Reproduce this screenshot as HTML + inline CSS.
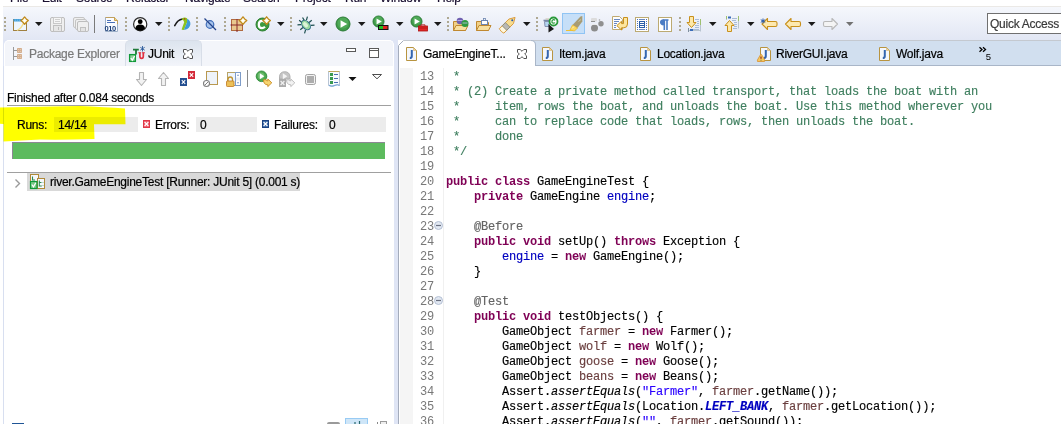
<!DOCTYPE html><html><head><meta charset="utf-8"><style>
*{margin:0;padding:0;box-sizing:border-box}
html,body{width:1061px;height:424px;overflow:hidden;background:#dfe5f5;position:relative;font-family:"Liberation Sans",sans-serif;font-size:12px;color:#000}
.a{position:absolute}
.t{position:absolute;white-space:pre;font-family:"Liberation Sans",sans-serif;font-size:12px;letter-spacing:-0.25px;line-height:14px;-webkit-text-stroke:0.2px currentColor}
svg{position:absolute;overflow:visible}
.code{position:absolute;left:446px;font-family:"Liberation Mono",monospace;font-size:12px;letter-spacing:-0.2px;white-space:pre;line-height:15px;color:#000;-webkit-text-stroke:0.15px currentColor}
.ln{position:absolute;left:405px;width:29px;text-align:right;font-family:"Liberation Mono",monospace;font-size:12px;letter-spacing:-0.2px;white-space:pre;line-height:15px;color:#787878}
.k{color:#7f0055;font-weight:bold;-webkit-text-stroke:0}
.c{color:#3f7f5f}
.f{color:#0000c0}
.an{color:#646464}
.lv{color:#6a3e3e}
.s{color:#2a00ff}
.i{font-style:italic}
</style></head><body>
<div class="a" style="left:0;top:0;width:3px;height:424px;background:#fff"></div>
<div class="a" style="left:0;top:0;width:1061px;height:6px;background:#fff;overflow:hidden">
<div class="t" style="left:10px;top:-9px;color:#1a1030">File</div>
<div class="t" style="left:42px;top:-9px;color:#1a1030">Edit</div>
<div class="t" style="left:76px;top:-9px;color:#1a1030">Source</div>
<div class="t" style="left:126px;top:-9px;color:#1a1030">Refactor</div>
<div class="t" style="left:185px;top:-9px;color:#1a1030">Navigate</div>
<div class="t" style="left:243px;top:-9px;color:#1a1030">Search</div>
<div class="t" style="left:295px;top:-9px;color:#1a1030">Project</div>
<div class="t" style="left:345px;top:-9px;color:#1a1030">Run</div>
<div class="t" style="left:380px;top:-9px;color:#1a1030">Window</div>
<div class="t" style="left:437px;top:-9px;color:#1a1030">Help</div>
</div>
<div class="a" style="left:3px;top:6px;width:1058px;height:34px;background:linear-gradient(#f5f7fc,#e2e7f4);border-top:1px solid #ebe9e6"></div>
<div class="a" style="left:4px;top:40px;width:390px;height:400px;background:#fff;border:1px solid #fff;border-bottom:0;border-radius:5px 5px 0 0;overflow:hidden">
<div class="a" style="left:0;top:0;width:388px;height:25px;background:#f3f5fa"></div>
</div>
<div class="a" style="left:125px;top:40px;width:77px;height:26px;background:linear-gradient(#dce4ee,#f3f5fa);border:1px solid #d8dee8;border-bottom:0;border-radius:5px 5px 0 0"></div>
<div class="a" style="left:3px;top:66px;width:1px;height:360px;background:#d8dff0"></div>
<div class="t" style="left:29px;top:47px;color:#7a7a7a">Package Explorer</div>
<div class="t" style="left:148px;top:47px;color:#000">JUnit</div>
<div class="t" style="left:7px;top:91px">Finished after 0.084 seconds</div>
<div class="a" style="left:7px;top:105px;width:384px;height:1px;background:#a0a0a0"></div>
<div class="a" style="left:54px;top:117px;width:84px;height:15px;background:#ececec"></div>
<div class="a" style="left:196px;top:117px;width:61px;height:15px;background:#ececec"></div>
<div class="a" style="left:325px;top:117px;width:61px;height:15px;background:#ececec"></div>
<div class="t" style="left:17px;top:118px">Runs:</div>
<div class="t" style="left:58px;top:118px">14/14</div>
<div class="t" style="left:155px;top:118px">Errors:</div>
<div class="t" style="left:200px;top:118px">0</div>
<div class="t" style="left:274px;top:118px">Failures:</div>
<div class="t" style="left:329px;top:118px">0</div>
<div class="a" style="left:12px;top:142px;width:373px;height:17px;background:#5dbb5e;border-top:1px solid #8c8894;border-left:1px solid #8c8894"></div>
<div class="a" style="left:7px;top:172px;width:384px;height:1px;background:#a0a0a0"></div>
<div class="a" style="left:27px;top:173px;width:273px;height:18px;background:#d9d9d9"></div>
<div class="t" style="left:50px;top:175px">river.GameEngineTest [Runner: JUnit 5] (0.001 s)</div>
<svg class="a" style="left:0;top:0;mix-blend-mode:multiply" width="1061" height="424"><path d="M0 107.5 Q40 106.5 79 106 Q105 107 125 108.5 L125.5 124.3 L94 124.3 L94.5 139 Q60 140 40 139.5 L3.5 141.5 L3.5 124 L0 123.7 Z" fill="#ffff00"/></svg>
<svg class="a" style="left:0;top:0" width="1061" height="424"><rect x="398" y="40" width="663" height="384" fill="#fff"/><rect x="531" y="40" width="530" height="26" fill="#d1dfef"/><path d="M535 65.5H1061" stroke="#a9b6c8" stroke-width="1"/><path d="M531 40.5H1061" stroke="#c4c9d0" stroke-width="1"/><path d="M399 66V45L403.5 40.5H531Q535 40.5 535 45V66Z" fill="#fff"/><path d="M398.5 424V45.5L403.5 40.5" stroke="#a4acbc" stroke-width="1" fill="none"/><path d="M403.5 40.5H531" stroke="#c4c9d0" stroke-width="1" fill="none"/><path d="M531 40.5Q535.5 40.5 535.5 45V66" stroke="#a9b6c8" stroke-width="1" fill="none"/><rect x="400" y="68" width="13" height="356" fill="#f5f5f5"/><rect x="443" y="68" width="1" height="356" fill="#f0f0f0"/></svg>
<div class="t" style="left:423px;top:47px;color:#000">GameEngineT...</div>
<div class="t" style="left:559px;top:47px;color:#000">Item.java</div>
<div class="t" style="left:657px;top:47px;color:#000">Location.java</div>
<div class="t" style="left:776px;top:47px;color:#000">RiverGUI.java</div>
<div class="t" style="left:896px;top:47px;color:#000">Wolf.java</div>
<div class="ln" style="top:70px">13</div>
<div class="code" style="top:70px"><span class="c"> *</span></div>
<div class="ln" style="top:85px">14</div>
<div class="code" style="top:85px"><span class="c"> * (2) Create a private method called transport, that loads the boat with an</span></div>
<div class="ln" style="top:100px">15</div>
<div class="code" style="top:100px"><span class="c"> *     item, rows the boat, and unloads the boat. Use this method wherever you</span></div>
<div class="ln" style="top:115px">16</div>
<div class="code" style="top:115px"><span class="c"> *     can to replace code that loads, rows, then unloads the boat.</span></div>
<div class="ln" style="top:130px">17</div>
<div class="code" style="top:130px"><span class="c"> *     done</span></div>
<div class="ln" style="top:145px">18</div>
<div class="code" style="top:145px"><span class="c"> */</span></div>
<div class="ln" style="top:160px">19</div>
<div class="code" style="top:160px"></div>
<div class="ln" style="top:175px">20</div>
<div class="code" style="top:175px"><span class="k">public</span> <span class="k">class</span> GameEngineTest {</div>
<div class="ln" style="top:190px">21</div>
<div class="code" style="top:190px">    <span class="k">private</span> GameEngine <span class="f">engine</span>;</div>
<div class="ln" style="top:205px">22</div>
<div class="code" style="top:205px"></div>
<div class="ln" style="top:220px">23</div>
<div class="code" style="top:220px">    <span class="an">@Before</span></div>
<div class="ln" style="top:235px">24</div>
<div class="code" style="top:235px">    <span class="k">public</span> <span class="k">void</span> setUp() <span class="k">throws</span> Exception {</div>
<div class="ln" style="top:250px">25</div>
<div class="code" style="top:250px">        <span class="f">engine</span> = <span class="k">new</span> GameEngine();</div>
<div class="ln" style="top:265px">26</div>
<div class="code" style="top:265px">    }</div>
<div class="ln" style="top:280px">27</div>
<div class="code" style="top:280px"></div>
<div class="ln" style="top:295px">28</div>
<div class="code" style="top:295px">    <span class="an">@Test</span></div>
<div class="ln" style="top:310px">29</div>
<div class="code" style="top:310px">    <span class="k">public</span> <span class="k">void</span> testObjects() {</div>
<div class="ln" style="top:325px">30</div>
<div class="code" style="top:325px">        GameObject <span class="lv">farmer</span> = <span class="k">new</span> Farmer();</div>
<div class="ln" style="top:340px">31</div>
<div class="code" style="top:340px">        GameObject <span class="lv">wolf</span> = <span class="k">new</span> Wolf();</div>
<div class="ln" style="top:355px">32</div>
<div class="code" style="top:355px">        GameObject <span class="lv">goose</span> = <span class="k">new</span> Goose();</div>
<div class="ln" style="top:370px">33</div>
<div class="code" style="top:370px">        GameObject <span class="lv">beans</span> = <span class="k">new</span> Beans();</div>
<div class="ln" style="top:385px">34</div>
<div class="code" style="top:385px">        Assert.<span class="i">assertEquals</span>(<span class="s">"Farmer"</span>, <span class="lv">farmer</span>.getName());</div>
<div class="ln" style="top:400px">35</div>
<div class="code" style="top:400px">        Assert.<span class="i">assertEquals</span>(Location.<span class="f i" style="font-weight:bold">LEFT_BANK</span>, <span class="lv">farmer</span>.getLocation());</div>
<div class="ln" style="top:415px">36</div>
<div class="code" style="top:415px">        Assert.<span class="i">assertEquals</span>(<span class="s">""</span>, <span class="lv">farmer</span>.getSound());</div>
<svg class="a" style="left:0;top:0" width="1061" height="424" viewBox="0 0 1061 424"><rect x="4" y="17" width="2" height="2" fill="#aea892"/><rect x="4" y="21" width="2" height="2" fill="#aea892"/><rect x="4" y="25" width="2" height="2" fill="#aea892"/><rect x="4" y="29" width="2" height="2" fill="#aea892"/><rect x="13.5" y="19.5" width="13" height="11" fill="#eef6fe" stroke="#a08040"/><rect x="13.5" y="19" width="10" height="2.5" fill="#45a0da"/><path d="M15 20.2H21" stroke="#9ad0f0" stroke-width="0.6" stroke-dasharray="1 1"/><path d="M17 30.5 Q22 28 24 22" stroke="#f2dc8a" stroke-width="1.3" fill="none"/><polygon points="24.60,16.90 26.27,18.94 28.30,20.60 26.27,22.27 24.60,24.30 22.94,22.27 20.90,20.60 22.94,18.94" fill="#fffae0" stroke="#c08a1c" stroke-width="1.3" stroke-linejoin="round"/><circle cx="24.6" cy="20.6" r="1.11" fill="#fff"/><polygon points="35,22 42.5,22 38.75,26" fill="#1a1a1a"/><rect x="50.5" y="17.5" width="14" height="14" rx="1.5" fill="#efefef" stroke="#bdbdbd"/><rect x="53.5" y="17.5" width="8" height="6" fill="#f6f6f6" stroke="#c8c8c8"/><path d="M55 19.5H60M55 21.5H60" stroke="#cfcfcf" stroke-width="1"/><rect x="53.5" y="25.5" width="8" height="6" fill="#e6e6e6" stroke="#c0c0c0"/><path d="M58.5 27V30" stroke="#bdbdbd" stroke-width="1"/><rect x="73.5" y="17.5" width="11" height="10" rx="1.5" fill="#efefef" stroke="#c4c4c4"/><rect x="75.5" y="19.5" width="11" height="10" rx="1.5" fill="#efefef" stroke="#c4c4c4"/><rect x="77.5" y="21.5" width="11" height="10" rx="1.5" fill="#efefef" stroke="#bdbdbd"/><rect x="80.5" y="27.5" width="5" height="4" fill="#e3e3e3" stroke="#c0c0c0"/><rect x="94" y="15" width="1" height="18" fill="#7a7a7a"/><path d="M105.5 17.5H114.5L117.5 20.5V31.5H105.5Z" fill="#fbfcff" stroke="#9eb0c8"/><path d="M105.5 17.5H114.5L117.5 20.5V24" stroke="#c0a060" fill="none"/><path d="M114.5 17.5V20.5H117.5" fill="#f0d890" stroke="#c8a050"/><path d="M107 20.5H111M107 22.5H115" stroke="#4a70b8" stroke-width="1"/><text x="104.5" y="30.5" font-family="Liberation Sans" font-weight="bold" font-size="7.5" fill="#1c3f7a" letter-spacing="-0.4">010</text><rect x="125" y="17" width="2" height="2" fill="#aea892"/><rect x="125" y="21" width="2" height="2" fill="#aea892"/><rect x="125" y="25" width="2" height="2" fill="#aea892"/><rect x="125" y="29" width="2" height="2" fill="#aea892"/><circle cx="140.2" cy="24.2" r="6.6" fill="#fff" stroke="#2a2a2a" stroke-width="1.2"/><circle cx="140.2" cy="21.7" r="2.4" fill="#000"/><path d="M135.3 28.6 Q135.8 24.4 140.2 24.4 Q144.6 24.4 145.1 28.6 Q143 30.8 140.2 30.8 Q137.4 30.8 135.3 28.6Z" fill="#000"/><polygon points="155,22 162.5,22 158.75,26" fill="#1a1a1a"/><rect x="168" y="17" width="2" height="2" fill="#aea892"/><rect x="168" y="21" width="2" height="2" fill="#aea892"/><rect x="168" y="25" width="2" height="2" fill="#aea892"/><rect x="168" y="29" width="2" height="2" fill="#aea892"/><path d="M174.8 25.5 Q177.5 19.8 182.5 19" stroke="#1a1a1a" stroke-width="1.7" fill="none" stroke-linecap="round"/><path d="M181.8 18.6 Q184.5 16.6 187 18.2 Q188 19.8 187 22.5 L184 29.8 Q182.8 30.3 181.6 29.6 L184.2 22.2 Q184 20.3 181.8 19.6 Z" fill="#8cc31e"/><path d="M187.2 18.8 Q190.6 20.8 190.4 24.2 Q190 28.2 185 29.8 L183.9 29.8 L187 22.4 Z" fill="#3d9ad8"/><circle cx="184.6" cy="18.9" r="0.8" fill="#b04a20"/><rect x="196" y="17" width="2" height="2" fill="#aea892"/><rect x="196" y="21" width="2" height="2" fill="#aea892"/><rect x="196" y="25" width="2" height="2" fill="#aea892"/><rect x="196" y="29" width="2" height="2" fill="#aea892"/><circle cx="210" cy="24.5" r="3.8" fill="#a8c4ec" stroke="#3e6cb8" stroke-width="1.2"/><path d="M204.5 18.5 L216 30" stroke="#23428a" stroke-width="1.2"/><rect x="224" y="17" width="2" height="2" fill="#aea892"/><rect x="224" y="21" width="2" height="2" fill="#aea892"/><rect x="224" y="25" width="2" height="2" fill="#aea892"/><rect x="224" y="29" width="2" height="2" fill="#aea892"/><rect x="231.5" y="19.5" width="11" height="11" fill="#e9c98e" stroke="#b06a40"/><path d="M231 25H243M237 19V31" stroke="#8a2a2a" stroke-width="1"/><path d="M230.5 25H232M237 30.5V32" stroke="#8a2a2a" stroke-width="1"/><polygon points="243.00,16.80 244.71,18.89 246.80,20.60 244.71,22.31 243.00,24.40 241.29,22.31 239.20,20.60 241.29,18.89" fill="#fffae0" stroke="#c08a1c" stroke-width="1.3" stroke-linejoin="round"/><circle cx="243" cy="20.6" r="1.14" fill="#fff"/><circle cx="262.5" cy="24.5" r="6.5" fill="#3e9a3e" stroke="#2b8030" stroke-width="1"/><path d="M265 22.2 Q263.5 20.8 262 20.8 Q258.8 20.8 258.8 24.5 Q258.8 28.2 262 28.2 Q263.5 28.2 265 26.8" stroke="#fff" stroke-width="2.2" fill="none"/><polygon points="266.60,16.80 268.31,18.89 270.40,20.60 268.31,22.31 266.60,24.40 264.89,22.31 262.80,20.60 264.89,18.89" fill="#fffae0" stroke="#c08a1c" stroke-width="1.3" stroke-linejoin="round"/><circle cx="266.6" cy="20.6" r="1.14" fill="#fff"/><polygon points="277,22 284.5,22 280.75,26" fill="#1a1a1a"/><rect x="290" y="17" width="2" height="2" fill="#aea892"/><rect x="290" y="21" width="2" height="2" fill="#aea892"/><rect x="290" y="25" width="2" height="2" fill="#aea892"/><rect x="290" y="29" width="2" height="2" fill="#aea892"/><g transform="rotate(-40 306 25)"><path d="M302.5 21.5L299.5 19.5M309.5 21.5L312.5 19.5M302 25H298.5M310 25H313.5M302.5 28.5L299.5 30.5M309.5 28.5L312.5 30.5M304.5 20.8L303.8 17M307.5 20.8L308.2 17" stroke="#1d4f4f" stroke-width="1.2"/><ellipse cx="306" cy="25" rx="3.6" ry="5.4" fill="#9ad8a0" stroke="#2a6a80" stroke-width="1"/><ellipse cx="305.8" cy="24.5" rx="1.8" ry="3" fill="#dcf4d8"/></g><polygon points="320,22 327.5,22 323.75,26" fill="#1a1a1a"/><circle cx="343" cy="24" r="7" fill="#3f9a48" stroke="#2a7a35" stroke-width="1"/><circle cx="343" cy="23" r="5.5" fill="#5ab462" opacity="0.6"/><polygon points="340.55,20.15 347.2,24 340.55,27.85" fill="#fff"/><polygon points="358,22 365.5,22 361.75,26" fill="#1a1a1a"/><circle cx="378.5" cy="21.5" r="5.5" fill="#3f9a48" stroke="#2a7a35" stroke-width="1"/><circle cx="378.5" cy="20.5" r="4.0" fill="#5ab462" opacity="0.6"/><polygon points="376.575,18.475 381.8,21.5 376.575,24.525" fill="#fff"/><rect x="378" y="25" width="10.5" height="5" fill="#111"/><rect x="379" y="26" width="4" height="3" fill="#22c020"/><rect x="383" y="26" width="4.5" height="3" fill="#e02020"/><polygon points="396,22 403.5,22 399.75,26" fill="#1a1a1a"/><circle cx="416.5" cy="21.5" r="5.5" fill="#3f9a48" stroke="#2a7a35" stroke-width="1"/><circle cx="416.5" cy="20.5" r="4.0" fill="#5ab462" opacity="0.6"/><polygon points="414.575,18.475 419.8,21.5 414.575,24.525" fill="#fff"/><rect x="418.5" y="26" width="9" height="5" fill="#e02828" stroke="#b01010" stroke-width="0.8"/><path d="M421 26V24.8H425V26M418.5 28H427.5" stroke="#b01010" stroke-width="0.8" fill="none"/><polygon points="434,22 441.5,22 437.75,26" fill="#1a1a1a"/><rect x="447" y="17" width="2" height="2" fill="#aea892"/><rect x="447" y="21" width="2" height="2" fill="#aea892"/><rect x="447" y="25" width="2" height="2" fill="#aea892"/><rect x="447" y="29" width="2" height="2" fill="#aea892"/><path d="M453.5 21.5H458L459 22.5H465.5V30.5H453.5Z" fill="#f0d088" stroke="#c08830"/><path d="M453.5 30.5L456 25.5H468L465.5 30.5Z" fill="#f8e0a0" stroke="#c08830"/><circle cx="460" cy="21" r="3.3" fill="#7060b0"/><circle cx="465" cy="23.5" r="3.5" fill="#2e9a40"/><path d="M457.5 20.5H462.5M462.5 23H467.5" stroke="#c8c0f0" stroke-width="0.8"/><path d="M476.5 21.5H481L482 22.5H488.5V30.5H476.5Z" fill="#f0d088" stroke="#c08830"/><path d="M476.5 30.5L479 25.5H491L488.5 30.5Z" fill="#f8e0a0" stroke="#c08830"/><rect x="481.5" y="20.5" width="6" height="4" fill="#fff" stroke="#6d86b0"/><rect x="483.5" y="18.5" width="2" height="2" fill="none" stroke="#6d86b0" stroke-width="0.8"/><g transform="rotate(-45 508 24.5)"><path d="M499 21.3H512.5L518 24.5L512.5 27.7H499Q497.6 24.5 499 21.3Z" fill="#f7dc8e" stroke="#d8983a" stroke-width="0.9"/><path d="M499.3 21.8H503V27.2H499.3Q498.3 24.5 499.3 21.8Z" fill="#fff8e0"/><rect x="503" y="21.3" width="4.5" height="6.4" fill="#b8b8b4" stroke="#8a8a78" stroke-width="0.8"/><circle cx="514" cy="24.5" r="1" fill="#2a5ab0"/></g><polygon points="523,22 530.5,22 526.75,26" fill="#1a1a1a"/><rect x="536" y="17" width="2" height="2" fill="#aea892"/><rect x="536" y="21" width="2" height="2" fill="#aea892"/><rect x="536" y="25" width="2" height="2" fill="#aea892"/><rect x="536" y="29" width="2" height="2" fill="#aea892"/><path d="M543.5 20.5H551" stroke="#7888a8" stroke-width="1.6"/><path d="M545.5 19H549" stroke="#c8c0a8" stroke-width="1"/><path d="M544.5 21.5H549.5L549 26.5H545Z" fill="#b4d4f0" stroke="#7a88a8" stroke-width="0.9"/><circle cx="553.5" cy="21.5" r="4" fill="#fff" stroke="#2a9a3a" stroke-width="1.8"/><path d="M555.2 20.2Q554 19.3 553 19.8Q551.5 20.6 552 22.4Q552.8 23.8 555.2 22.8" stroke="#2a9a3a" stroke-width="1.2" fill="none"/><polygon points="548.5,24 554,29 548.5,32.5" fill="#1a1a1a"/><rect x="562.5" y="13.5" width="22" height="20" fill="#c6dff8" stroke="#90c4f4"/><path d="M572.5 25 L580.5 16.5 L582.3 16 L582.3 21.5 L577.5 28 Z" fill="#a89c74"/><path d="M578.5 21.5 L581 19.5" stroke="#c8c8b4" stroke-width="0.9"/><path d="M570 30 L572.5 25 L577.5 28 L574.5 31 Z" fill="#fad860" stroke="#e8b020" stroke-width="0.7"/><path d="M572 28.5 L574 26.5" stroke="#fff0c0" stroke-width="1"/><path d="M566 30.5 H573" stroke="#f0c030" stroke-width="1"/><rect x="591" y="18" width="6" height="3.5" rx="1" fill="#dcdcdc"/><path d="M591 21.5H595" stroke="#909090" stroke-width="1"/><circle cx="594.5" cy="28" r="3.5" fill="#8c8c8c"/><path d="M592 24.5H597" stroke="#f0f0f0" stroke-width="0.8"/><circle cx="601" cy="23.8" r="2.7" fill="#909090"/><circle cx="599.5" cy="20" r="0.8" fill="#a0a0a0"/><path d="M612.5 16.5H619.5L622.5 19.5V29.5H612.5Z" fill="#fdfdfd" stroke="#c0aa70"/><path d="M614 19.5H620M614 21.5H619M614 23.5H617M614 25.5H616M614 27.5H616" stroke="#6a88c0" stroke-width="1"/><path d="M623.5 17.5H627.5V24Q627.5 27.8 623.8 27.8H621.5V30L616.8 25.6L621.5 21.3V23.6H623.5Z" fill="#fde6a0" stroke="#c8901c" stroke-width="1" stroke-linejoin="round"/><rect x="635.5" y="17.5" width="13" height="14" fill="#fff" stroke="#bcaa72"/><rect x="637" y="19" width="1" height="1" fill="#4a70b8"/><rect x="646" y="19" width="1" height="1" fill="#4a70b8"/><rect x="637" y="21" width="1" height="1" fill="#4a70b8"/><rect x="646" y="21" width="1" height="1" fill="#4a70b8"/><rect x="637" y="23" width="1" height="1" fill="#4a70b8"/><rect x="646" y="23" width="1" height="1" fill="#4a70b8"/><rect x="637" y="25" width="1" height="1" fill="#4a70b8"/><rect x="646" y="25" width="1" height="1" fill="#4a70b8"/><rect x="637" y="27" width="1" height="1" fill="#4a70b8"/><rect x="646" y="27" width="1" height="1" fill="#4a70b8"/><rect x="637" y="29" width="1" height="1" fill="#4a70b8"/><rect x="646" y="29" width="1" height="1" fill="#4a70b8"/><path d="M639 19.5H645M639 29.5H645" stroke="#6a88c0" stroke-width="1"/><rect x="639.5" y="21.5" width="5" height="6" fill="#fff" stroke="#2a5fa8"/><path d="M640 23.5H644M640 25.5H644" stroke="#2a5fa8" stroke-width="1"/><rect x="658.5" y="17.5" width="13" height="14" fill="#fff" stroke="#bcaa72"/><path d="M662.5 20 H668.5 M663 20 Q660.5 20.5 660.8 22.5 Q661 24.5 663.5 24.8 Z M664.3 20V30 M667 20V30" stroke="#4a7cc4" stroke-width="1.6" fill="#4a7cc4"/><rect x="679" y="17" width="2" height="2" fill="#aea892"/><rect x="679" y="21" width="2" height="2" fill="#aea892"/><rect x="679" y="25" width="2" height="2" fill="#aea892"/><rect x="679" y="29" width="2" height="2" fill="#aea892"/><path d="M689 30.5H700.5M700.5 19V31.5" stroke="#b8c4d0" stroke-width="1"/><path d="M700.5 19V25" stroke="#9ec070" stroke-width="1"/><path d="M695 19.5H699M697 21.5H699M697 23.5H699M695 25.5H699M695 27.5H699M692 29.5H699" stroke="#a8bcd8" stroke-width="1"/><rect x="690" y="29" width="3" height="2" fill="#3a6cb8"/><rect x="688" y="28" width="1" height="4" fill="#8090a0"/><path d="M689.5 16.5H693.5V22.5H696L691.5 27.5L687 22.5H689.5Z" fill="#fde8a8" stroke="#c8901c" stroke-width="1"/><polygon points="709,22 716.5,22 712.75,26" fill="#1a1a1a"/><path d="M738.5 16V28.5M726.5 16V20" stroke="#b8c4d0" stroke-width="1"/><path d="M738.5 16V21M726.5 16V19" stroke="#9ec070" stroke-width="1"/><path d="M732 18.5H737M732 20.5H736M734 22.5H737M734 24.5H737M734 26.5H737M733 28.5H737" stroke="#a8bcd8" stroke-width="1"/><rect x="728" y="16.5" width="3" height="2" fill="#3a6cb8"/><path d="M727.5 31.5H731.5V25.5H734L729.5 20.5L725 25.5H727.5Z" fill="#fde8a8" stroke="#c8901c" stroke-width="1"/><polygon points="747,22 754.5,22 750.75,26" fill="#1a1a1a"/><path d="M762.0 24 L767.5 18.5 V21.5 H775.5 Q777.0 21.5 777.0 23 V25 Q777.0 26.5 775.5 26.5 H767.5 V29.5 Z" fill="#fde9b0" stroke="#c8901c" stroke-width="1.1" stroke-linejoin="round"/><path d="M763 18.5V23.5M760.8 19.7L765.2 22.3M765.2 19.7L760.8 22.3" stroke="#2a5aa8" stroke-width="1"/><path d="M785.5 24 L791 18.5 V21.5 H799 Q800.5 21.5 800.5 23 V25 Q800.5 26.5 799 26.5 H791 V29.5 Z" fill="#fde9b0" stroke="#c8901c" stroke-width="1.1" stroke-linejoin="round"/><polygon points="808,22 815.5,22 811.75,26" fill="#1a1a1a"/><path d="M837.5 24 L832 18.5 V21.5 H825 Q823.5 21.5 823.5 23 V25 Q823.5 26.5 825 26.5 H832 V29.5 Z" fill="#f4f4f4" stroke="#b8b8b8" stroke-width="1.1" stroke-linejoin="round"/><polygon points="846,22 853.5,22 849.75,26" fill="#727272"/><path d="M13.5 47V60M13.5 50.5H17M13.5 56.5H17" stroke="#9a9a9a" stroke-width="1"/><rect x="17" y="48" width="5" height="5" rx="0.8" fill="#d4ae8e"/><rect x="17" y="54" width="5" height="5" rx="0.8" fill="#d4ae8e"/><path d="M18.5 49.5h0.6M20.5 49.5h0.6M18.5 51.5h0.6M20.5 51.5h0.6M18.5 55.5h0.6M20.5 55.5h0.6M18.5 57.5h0.6M20.5 57.5h0.6" stroke="#f4e4d0" stroke-width="1"/><path d="M133 49.6H138.8M136 49.6V54.5" stroke="#1e7a38" stroke-width="1.8"/><rect x="129.6" y="54.6" width="5.8" height="6.8" fill="#8ccf98" stroke="#0f9a38" stroke-width="1.3"/><path d="M130.8 58L132.3 60.2L134.6 56" stroke="#fff" stroke-width="1.3" fill="none"/><path d="M139.9 52.8V56.3Q139.9 58.4 141.6 58.4Q143.3 58.4 143.3 56.3V52.8" stroke="#e03040" stroke-width="1.7" fill="none"/><path d="M138.3 52.8H141.2M142 52.8H144.9" stroke="#e03040" stroke-width="1.1"/><path d="M142.5 46V51.5M140.3 47.3L144.7 50.2M144.7 47.3L140.3 50.2" stroke="#2a5a9a" stroke-width="0.9"/><polygon points="183.50,49.50 186.20,49.50 188.00,51.30 189.80,49.50 192.50,49.50 192.50,52.20 190.70,54.00 192.50,55.80 192.50,58.50 189.80,58.50 188.00,56.70 186.20,58.50 183.50,58.50 183.50,55.80 185.30,54.00 183.50,52.20" fill="#fff" stroke="#505050" stroke-width="1" stroke-linejoin="miter"/><rect x="346.5" y="48.5" width="9" height="3" fill="#fff" stroke="#5a5a5a"/><rect x="369.5" y="48.5" width="9" height="9" fill="#fff" stroke="#5a5a5a"/><path d="M370 50.5H378" stroke="#5a5a5a" stroke-width="1"/><path d="M139.5 72.5H143.5V79.5H146.5L141.5 85.5L136.5 79.5H139.5Z" fill="#f2f2f2" stroke="#b4b4b4" stroke-width="1.1" stroke-linejoin="round"/><path d="M161.5 85.5H165.5V78.5H168.5L163.5 72.5L158.5 78.5H161.5Z" fill="#f2f2f2" stroke="#b4b4b4" stroke-width="1.1" stroke-linejoin="round"/><rect x="180" y="78" width="7" height="8" fill="#234e90"/><rect x="188" y="71" width="7" height="8" fill="#d42a3a"/><path d="M181.8 80.2L185.2 83.8M185.2 80.2L181.8 83.8M189.8 73.2L193.2 76.8M193.2 73.2L189.8 76.8" stroke="#fff" stroke-width="1.1"/><rect x="206.5" y="71.5" width="11" height="13" fill="#eef3fa" stroke="#b89850"/><circle cx="206.5" cy="83.5" r="3" fill="#fff" stroke="#808080" stroke-width="1.1"/><path d="M204.8 85.2L208.2 81.8" stroke="#808080" stroke-width="1"/><rect x="227.5" y="72.5" width="13" height="13" fill="#eef5fd" stroke="#b8a468"/><rect x="235.5" y="72.5" width="5" height="13" fill="#fff" stroke="#7e9cc8"/><rect x="236" y="77.5" width="4" height="3" fill="#e8eef6"/><path d="M238 74.8V75.8M238 82.3V83.3" stroke="#2a5aa8" stroke-width="1.2"/><path d="M228 81V79.5Q228 77 230.2 77Q232.5 77 232.5 79.5V81" stroke="#c09430" stroke-width="1.3" fill="none"/><rect x="226.5" y="81" width="7.5" height="5.5" rx="0.8" fill="#ecc058" stroke="#c07820" stroke-width="0.8"/><rect x="247" y="70" width="1" height="17" fill="#8a8a8a"/><circle cx="261.5" cy="76.3" r="5.3" fill="#4aa84e" stroke="#2e8a3a" stroke-width="0.9"/><circle cx="261" cy="75.8" r="3.3" fill="#7cc47e" opacity="0.7"/><polygon points="259.8,73.3 264.3,76.3 259.8,79.3" fill="#fff"/><path d="M263.5 79.8Q263.5 84.8 267.8 84.8V86.6L271.8 82.8L267.8 79V80.9Q266.3 81 266.2 79.8Z" fill="#f6d470" stroke="#c88a20" stroke-width="0.9" stroke-linejoin="round"/><path d="M279.5 79V76.3A5.3 5.3 0 0 1 290 76.3V79Z" fill="#c4c4c4" stroke="#ababab" stroke-width="0.9"/><polygon points="282.8,73.3 287.3,76.3 282.8,79.3" fill="#f4f4f4"/><rect x="279" y="79" width="7" height="8" fill="#ababab"/><path d="M280.6 81L284.4 85M284.4 81L280.6 85" stroke="#f0f0f0" stroke-width="1.2"/><path d="M286.5 79.8Q286.5 84.8 290.8 84.8V86.6L294.8 82.8L290.8 79V80.9Q289.3 81 289.2 79.8Z" fill="#f2f2f2" stroke="#b8b8b8" stroke-width="0.9" stroke-linejoin="round"/><rect x="305.5" y="74.5" width="10" height="10" rx="1.8" fill="#f2f2f2" stroke="#a4a4a4"/><rect x="307" y="76" width="7" height="7" fill="#adadad"/><path d="M328.5 71.5H339.5V85.5Q337.5 84 335 85.5Q332 87 328.5 85.5Z" fill="#f8fbff" stroke="#b8c4d4"/><path d="M328.5 71.5H339.5" stroke="#c0a860"/><path d="M329 85.3Q332 87 335 85.3Q337.5 84 339.5 85.5" stroke="#7aa8d8" stroke-width="1.1" fill="none"/><rect x="330" y="73" width="3" height="3" fill="#3a9a50"/><path d="M334 74.5H338" stroke="#4a70b0" stroke-width="1"/><rect x="330" y="77" width="3" height="3" fill="#3a9a50"/><path d="M334 78.5H338" stroke="#4a70b0" stroke-width="1"/><rect x="330" y="81" width="3" height="3" fill="#3a9a50"/><path d="M334 82.5H338" stroke="#4a70b0" stroke-width="1"/><polygon points="348.5,77 356.5,77 352.5,81" fill="#111"/><polygon points="372.5,74.5 381.5,74.5 377,78.8" fill="#fff" stroke="#3a3a3a" stroke-width="0.9"/><rect x="143" y="120" width="7" height="8" fill="#e03848"/><rect x="144" y="121" width="5" height="6" fill="#ec5a68"/><path d="M144.6 122L148.4 126M148.4 122L144.6 126" stroke="#fff" stroke-width="1.2"/><rect x="262" y="120" width="7" height="8" fill="#1a4282"/><rect x="263" y="121" width="5" height="6" fill="#3464a4"/><path d="M263.6 122L267.4 126M267.4 122L263.6 126" stroke="#fff" stroke-width="1.2"/><path d="M15.5 179.5L19.5 183.5L15.5 187.5" stroke="#9a9a9a" stroke-width="1.4" fill="none"/><rect x="30.5" y="174.5" width="8" height="9" fill="#f6f8fc" stroke="#b08a38"/><path d="M32.5 176.5V180H35" stroke="#2e8a50" stroke-width="1.1" fill="none"/><rect x="37.5" y="178.5" width="7" height="10" fill="#f6f8fc" stroke="#b08a38"/><path d="M39.3 180.5V186H41.8M39 182.5H41.5M43 182.5V183M43 185V185.5" stroke="#2e8a50" stroke-width="1.1" fill="none"/><rect x="30.5" y="181.5" width="6.5" height="7" fill="#7cc88a" stroke="#0f9a38" stroke-width="1.2"/><path d="M31.8 184.5L33.5 186.8L35.8 182.8" stroke="#fff" stroke-width="1.2" fill="none"/><rect x="12" y="423" width="12" height="3" fill="#1f5596"/><rect x="327" y="422" width="13" height="4" rx="2" fill="#9a9a9a"/><rect x="345.5" y="418.5" width="22" height="8" fill="#cfe6f8" stroke="#98cbf4"/><path d="M355 422V425M359.5 421V425" stroke="#2a6a70" stroke-width="1.2"/><rect x="380.5" y="421.5" width="6" height="4" fill="#eee" stroke="#9a9a9a"/><path d="M377.5 422V424" stroke="#888" stroke-width="1"/><path d="M406.5 47.5H413.5L416.5 50.5V60.5H406.5Z" fill="#f4f7fc" stroke="#b89440" stroke-width="1"/><path d="M413.5 47.8V50.5H416.2Z" fill="#f0dca8" stroke="#d0b070" stroke-width="0.6"/><path d="M411.8 50V56.2 Q411.8 58 409.8 58" stroke="#3566b0" stroke-width="2" fill="none"/><polygon points="517.50,49.50 520.20,49.50 522.00,51.30 523.80,49.50 526.50,49.50 526.50,52.20 524.70,54.00 526.50,55.80 526.50,58.50 523.80,58.50 522.00,56.70 520.20,58.50 517.50,58.50 517.50,55.80 519.30,54.00 517.50,52.20" fill="#fff" stroke="#505050" stroke-width="1" stroke-linejoin="miter"/><path d="M542.5 47.5H549.5L552.5 50.5V60.5H542.5Z" fill="#f4f7fc" stroke="#b89440" stroke-width="1"/><path d="M549.5 47.8V50.5H552.2Z" fill="#f0dca8" stroke="#d0b070" stroke-width="0.6"/><path d="M547.8 50V56.2 Q547.8 58 545.8 58" stroke="#3566b0" stroke-width="2" fill="none"/><path d="M640.5 47.5H647.5L650.5 50.5V60.5H640.5Z" fill="#f4f7fc" stroke="#b89440" stroke-width="1"/><path d="M647.5 47.8V50.5H650.2Z" fill="#f0dca8" stroke="#d0b070" stroke-width="0.6"/><path d="M645.8 50V56.2 Q645.8 58 643.8 58" stroke="#3566b0" stroke-width="2" fill="none"/><path d="M760.5 47.5H767.5L770.5 50.5V60.5H760.5Z" fill="#f4f7fc" stroke="#b89440" stroke-width="1"/><path d="M767.5 47.8V50.5H770.2Z" fill="#f0dca8" stroke="#d0b070" stroke-width="0.6"/><path d="M765.8 50V56.2 Q765.8 58 763.8 58" stroke="#3566b0" stroke-width="2" fill="none"/><path d="M757.5 61.5 Q757 60 758 59 L760.6 54.5 Q761 53.8 761.6 54.5 L764.2 59 Q765 60 764.5 61.5 Z" fill="#f6c860" stroke="#d89030" stroke-width="0.8"/><path d="M761 56.5V58.8" stroke="#801818" stroke-width="1.1"/><path d="M761 59.8V60.6" stroke="#506030" stroke-width="1"/><path d="M879.5 47.5H886.5L889.5 50.5V60.5H879.5Z" fill="#f4f7fc" stroke="#b89440" stroke-width="1"/><path d="M886.5 47.8V50.5H889.2Z" fill="#f0dca8" stroke="#d0b070" stroke-width="0.6"/><path d="M884.8 50V56.2 Q884.8 58 882.8 58" stroke="#3566b0" stroke-width="2" fill="none"/><circle cx="438.5" cy="225.5" r="4" fill="#e2e8f2" stroke="#b4c0d4" stroke-width="1"/><path d="M436 225.5H441" stroke="#6a7080" stroke-width="1.2"/><circle cx="438.5" cy="300.5" r="4" fill="#e2e8f2" stroke="#b4c0d4" stroke-width="1"/><path d="M436 300.5H441" stroke="#6a7080" stroke-width="1.2"/><path d="M979.5 47.3L982 49.5L979.5 51.7M983 47.3L985.5 49.5L983 51.7" stroke="#000" stroke-width="1.3" fill="none"/><text x="985.8" y="60" font-family="Liberation Sans" font-size="9.5" fill="#000">5</text></svg>
<div class="a" style="left:987px;top:13px;width:80px;height:21px;background:#fff;border:1px solid #707070"></div>
<div class="t" style="left:990px;top:17px;color:#3a3a3a">Quick Access</div>
</body></html>
